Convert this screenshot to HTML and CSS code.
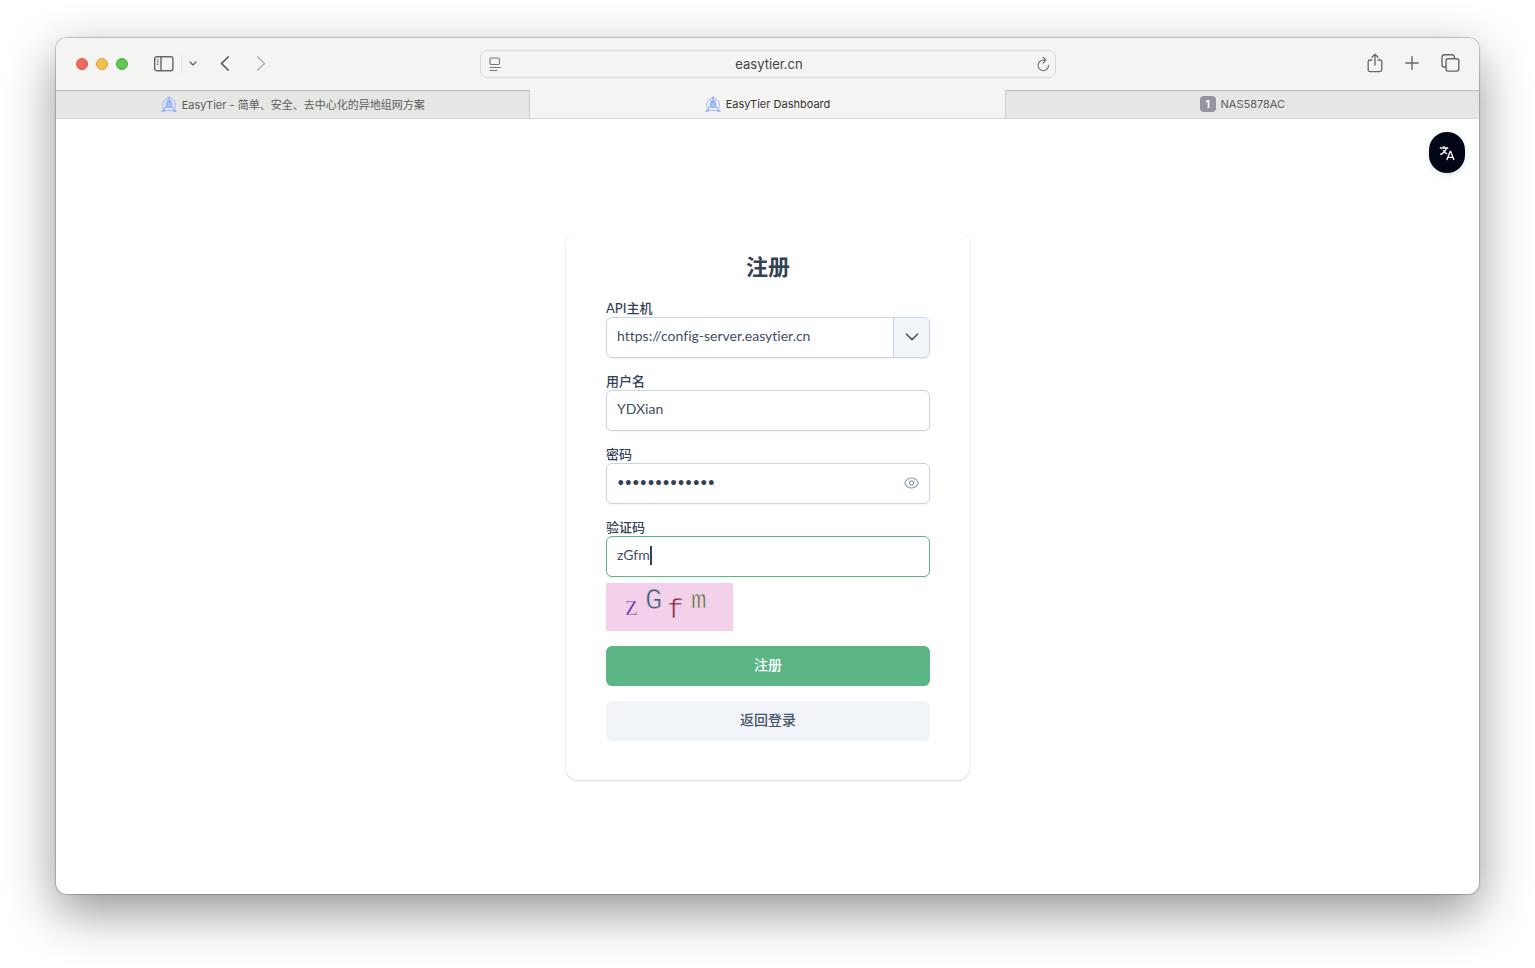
FILE: index.html
```html
<!DOCTYPE html>
<html lang="zh-CN">
<head>
    <meta charset="UTF-8">
    <meta name="viewport" content="width=device-width, initial-scale=1.0">
    <title>EasyTier Dashboard</title>
    <link rel="stylesheet" href="styles.css">
</head>
<body>
    <svg class="defs" width="0" height="0" aria-hidden="true">
        <symbol id="logo" viewBox="0 0 16 16">
            <path d="M2.600 12.500A6.500 6.500 0 0 1 6 2.600M10 2.600A6.500 6.500 0 0 1 13.400 12.500M4.500 14.500h7" fill="none" stroke="#9db9f8" stroke-width="1"/>
            <circle cx="8" cy="2" r="1.600" fill="#8fb0fa"/>
            <path d="M5.500 4.800h5M8 3.500v2M10.500 10.500l3 3M5.500 10.500l-3 3" fill="none" stroke="#8fb0fa" stroke-width="1.200"/>
            <circle cx="8" cy="8.500" r="3.400" fill="#8fb0fa"/>
            <path d="M6.500 7.800h3M6.500 9.600h3" stroke="#dfe7fa" stroke-width=".7"/>
            <path d="M.3 15.800c0-3.200 4-3.200 4 0zM11.700 15.800c0-3.200 4-3.200 4 0z" fill="#8fb0fa"/>
        </symbol>
    </svg>
    <div class="window">
        <header class="toolbar">
            <div class="tools">
                <div class="lights">
                    <button class="light red" aria-label="关闭"></button>
                    <button class="light yellow" aria-label="最小化"></button>
                    <button class="light green" aria-label="缩放"></button>
                </div>
                <button class="icon-btn sidebar-btn" aria-label="边栏">
                    <svg width="20" height="16" viewBox="0 0 20 16" fill="none" stroke="#666" stroke-width="1.4"><rect x=".7" y=".7" width="18.2" height="14" rx="2"/><path d="M7 1v13.5"/><path d="M2.8 3.8h2M2.8 6h2M2.8 8.2h2" stroke-width="1"/></svg>
                </button>
                <span class="divider"></span>
                <button class="icon-btn" aria-label="标签页组">
                    <svg width="8" height="6" viewBox="0 0 8 6" fill="none" stroke="#666" stroke-width="1.4" stroke-linecap="round" stroke-linejoin="round"><path d="M1 1l3 3 3-3"/></svg>
                </button>
                <button class="icon-btn back-btn" aria-label="后退">
                    <svg width="10" height="16" viewBox="0 0 10 16" fill="none" stroke="#555" stroke-width="1.7" stroke-linecap="round" stroke-linejoin="round"><path d="M8.2 1L1.5 7.500l6.7 6.500"/></svg>
                </button>
                <button class="icon-btn forward-btn" aria-label="前进" disabled>
                    <svg width="10" height="16" viewBox="0 0 10 16" fill="none" stroke="#b4b4b3" stroke-width="1.7" stroke-linecap="round" stroke-linejoin="round"><path d="M1.8 1L8.500 7.500l-6.700 6.500"/></svg>
                </button>
            </div>
            <div class="address">
                <button class="icon-btn" aria-label="页面菜单">
                    <svg width="12" height="15" viewBox="0 0 12 15" fill="none" stroke="#777" stroke-width="1.1" stroke-linecap="round"><rect x="1" y="1" width="9.5" height="6.5" rx="1.2"/><path d="M1 10.5h10.5M1 13.5h7"/></svg>
                </button>
                <input class="url" type="text" value="easytier.cn" aria-label="地址">
                <button class="icon-btn" aria-label="重新载入">
                    <svg width="13" height="16" viewBox="0 0 13 16" fill="none" stroke="#777" stroke-width="1.2" stroke-linecap="round" stroke-linejoin="round"><path d="M9 4.2H6.2a5.2 5.2 0 1 0 5.3 5.2M6.2 1.5L9 4.2 6.2 7"/></svg>
                </button>
            </div>
            <div class="tools right">
                <button class="icon-btn" aria-label="共享">
                    <svg width="16" height="20" viewBox="0 0 16 20" fill="none" stroke="#666" stroke-width="1.3" stroke-linecap="round" stroke-linejoin="round"><path d="M5 7H3a1.8 1.8 0 0 0-1.8 1.8v8A1.8 1.8 0 0 0 3 18.600h10a1.800 1.800 0 0 0 1.800-1.800v-8A1.800 1.800 0 0 0 13 7h-2M8 12V1.500M5 4.200l3-3 3 3"/></svg>
                </button>
                <button class="icon-btn" aria-label="新建标签页">
                    <svg width="14" height="14" viewBox="0 0 14 14" fill="none" stroke="#666" stroke-width="1.4" stroke-linecap="round"><path d="M7 .8v12.400M.8 7h12.400"/></svg>
                </button>
                <button class="icon-btn" aria-label="标签页概览">
                    <svg width="19" height="18" viewBox="0 0 19 18" fill="none" stroke="#666" stroke-width="1.4"><rect x="5" y="4.700" width="12.800" height="12.400" rx="2"/><path d="M5 13H3.200a2.200 2.200 0 0 1-2.200-2.200V3A2.200 2.200 0 0 1 3.200.8h8A2.200 2.200 0 0 1 13.400 3v1.700"/></svg>
                </button>
            </div>
        </header>
        <nav class="tabs">
            <a class="tab" href="#home"><svg class="logo" width="16" height="16"><use href="#logo"/></svg>EasyTier - 简单、安全、去中心化的异地组网方案</a>
            <a class="tab active" href="#dashboard"><svg class="logo" width="16" height="16"><use href="#logo"/></svg>EasyTier Dashboard</a>
            <a class="tab" href="#nas"><span class="badge">1</span>NAS5878AC</a>
        </nav>
        <main class="page">
            <button class="lang" aria-label="切换语言">
                <svg width="16" height="16" viewBox="0 0 16 16" fill="none" stroke="#fff" stroke-width="1.3" stroke-linejoin="round"><path d="M.8 3h8.400M5 1v2M7.500 3C6.800 6 4.500 8.200 1.200 9.600M4 5c1 1.800 2.400 3.200 4.200 4"/><path d="M7.800 15l3.300-8.500h.6L15 15M9 12.400h4.800"/></svg>
            </button>
            <form class="card">
                <h1 class="title">注册</h1>
                <div class="field">
                    <label for="host">API主机</label>
                    <div class="control">
                        <input id="host" type="text" value="https://config-server.easytier.cn">
                        <button class="dropdown" type="button" aria-label="选择主机">
                            <svg width="14" height="8" viewBox="0 0 14 8" fill="none" stroke="#475569" stroke-width="1.600" stroke-linecap="round" stroke-linejoin="round"><path d="M1.500 1.200L7 6.600l5.500-5.400"/></svg>
                        </button>
                    </div>
                </div>
                <div class="field">
                    <label for="username">用户名</label>
                    <div class="control"><input id="username" type="text" value="YDXian"></div>
                </div>
                <div class="field">
                    <label for="password">密码</label>
                    <div class="control">
                        <input id="password" class="password" type="password" value="easytier12345">
                        <button class="eye" type="button" aria-label="显示密码">
                            <svg width="15" height="12" viewBox="0 0 15 12" fill="none" stroke="#94a3b8" stroke-width="1.200"><path d="M.7 6C2.200 2.600 4.600 1 7.500 1s5.300 1.600 6.800 5c-1.500 3.400-3.900 5-6.800 5S2.200 9.400.7 6z"/><circle cx="7.500" cy="6" r="2.100"/></svg>
                        </button>
                    </div>
                </div>
                <div class="field">
                    <label for="captcha">验证码</label>
                    <div class="control focused">
                        <input id="captcha" type="text" value="zGfm">
                        <span class="caret"></span>
                    </div>
                </div>
                <svg class="captcha" width="127" height="48" viewBox="0 0 127 48">
                    <rect width="127" height="48" fill="#f4d1eb"/>
                    <text class="serif" x="19" y="32" font-size="29" fill="#4d2d9e">z</text>
                    <text x="39" y="26" font-size="29" fill="#3c6478">G</text>
                    <text x="61" y="35" font-size="28" fill="#7c2438">f</text>
                    <text x="85" y="25" font-size="26" fill="#4c7030">m</text>
                </svg>
                <button class="btn primary" type="submit">注册</button>
                <button class="btn secondary" type="button">返回登录</button>
            </form>
        </main>
    </div>
</body>
</html>
```
FILE: styles.css
```css
* { box-sizing: border-box; }
body { margin: 0; min-height: 100vh; padding: 38px 56px 74px; display: flex; background: #fff; font-family: Inter, "Noto Sans CJK SC", sans-serif; }
button { font-family: inherit; border: none; background: none; padding: 0; cursor: pointer; }
svg { display: block; }
.defs { position: absolute; }

.window { flex: 1; display: flex; flex-direction: column; border-radius: 11px; overflow: hidden; background: #fff; box-shadow: 0 0 1px 1px rgba(0, 0, 0, 0.2), 0 18px 50px rgba(0, 0, 0, 0.42); }

/* browser toolbar */
.toolbar { display: grid; grid-template-columns: 1fr minmax(0, 576px) 1fr; align-items: center; height: 52px; padding: 0 19px 0 20px; background: #f4f4f2; }
.tools { display: flex; align-items: center; }
.tools.right { justify-content: flex-end; gap: 22px; padding-bottom: 2px; }
.lights { display: flex; gap: 8px; }
.light { width: 12px; height: 12px; border-radius: 50%; }
.red { background: #ec6a5e; border: 1px solid #d9574c; }
.yellow { background: #f4bf4f; border: 1px solid #dba73a; }
.green { background: #61c554; border: 1px solid #4fad41; }
.sidebar-btn { margin-left: 26px; }
.divider { width: 1px; height: 18px; margin: 0 7px; background: #e0e0df; }
.back-btn { margin-left: 23px; }
.forward-btn { margin-left: 26px; }
.address { display: flex; align-items: center; height: 28px; padding: 0 5px 0 8px; border: 1px solid #d8d8d6; border-radius: 7px; }
.url { flex: 1; min-width: 0; border: none; outline: none; background: none; text-align: center; font: 13px Inter, sans-serif; color: #444; }

.tabs { display: grid; grid-template-columns: repeat(3, 1fr); height: 29px; border-bottom: 1px solid #d6d6d5; background: #f4f4f2; }
.tab { display: flex; align-items: center; justify-content: center; gap: 5px; padding-bottom: 2px; background: #e6e6e5; border-top: 1px solid #c2c2c1; box-shadow: inset 0 1px 1px rgba(0, 0, 0, 0.05); font-size: 11px; color: #5c5c5b; text-decoration: none; white-space: nowrap; }
.tab:first-child { border-right: 1px solid #cdcdcc; }
.tab:last-child { border-left: 1px solid #cdcdcc; }
.tab.active { background: #f4f4f2; border-top-color: #f4f4f2; box-shadow: none; color: #333; }
.badge { width: 16px; height: 16px; border-radius: 4px; background: #9494a0; color: #fff; font-size: 11px; font-weight: 600; line-height: 16px; text-align: center; }

/* register page */
.page { flex: 1; position: relative; display: flex; align-items: center; justify-content: center; padding-bottom: 2px; }
.lang { position: absolute; top: 13px; right: 14px; width: 36px; height: 41px; display: flex; align-items: center; justify-content: center; border-radius: 18px; background: #020617; box-shadow: 0 2px 6px rgba(0, 0, 0, 0.12); }
.card { width: 100%; max-width: 403px; padding: 21px 39px 39px 40px; display: flex; flex-direction: column; gap: 15px; border-radius: 12px; background: #fff; box-shadow: 0 1px 3px rgba(0, 0, 0, 0.1), 0 1px 2px rgba(0, 0, 0, 0.06); }
.title { margin: 0 0 4px; font-size: 22px; line-height: 28px; font-weight: 700; text-align: center; color: #334155; }
.field label { display: block; padding-bottom: 1px; font: 500 13px/16px Lato, "Noto Sans CJK SC", sans-serif; color: #334155; }
.control { position: relative; display: flex; height: 41px; border: 1px solid #cbd5e1; border-radius: 6px; overflow: hidden; background: #fff; box-shadow: 0 1px 2px rgba(18, 18, 23, 0.05); }
.control input { flex: 1; min-width: 0; padding: 0 10px 3px; border: none; outline: none; background: none; font: 14px Lato, sans-serif; font-variant-ligatures: none; color: #3f4d61; }
.control .password { font-size: 13px; color: #334155; }
.focused { border-color: #5bb585; }
.dropdown { width: 36px; display: flex; align-items: center; justify-content: center; border-left: 1px solid #cbd5e1; background: #f1f5f9; }
.eye { width: 36px; display: flex; align-items: center; justify-content: center; }
.caret { position: absolute; left: 43px; top: 9px; width: 2px; height: 19px; background: #334155; }
.captcha { margin-top: -9px; }
.captcha text { font-family: "Liberation Mono", monospace; stroke: #f4d1eb; stroke-width: 0.7px; }
.captcha .serif { font-family: "Liberation Serif", serif; }
.btn { height: 40px; padding-bottom: 2px; border-radius: 6px; font-size: 14px; font-weight: 500; line-height: 20px; }
.primary { background: #5bb585; color: #fff; }
.secondary { background: #f1f5f9; color: #475569; }
```
